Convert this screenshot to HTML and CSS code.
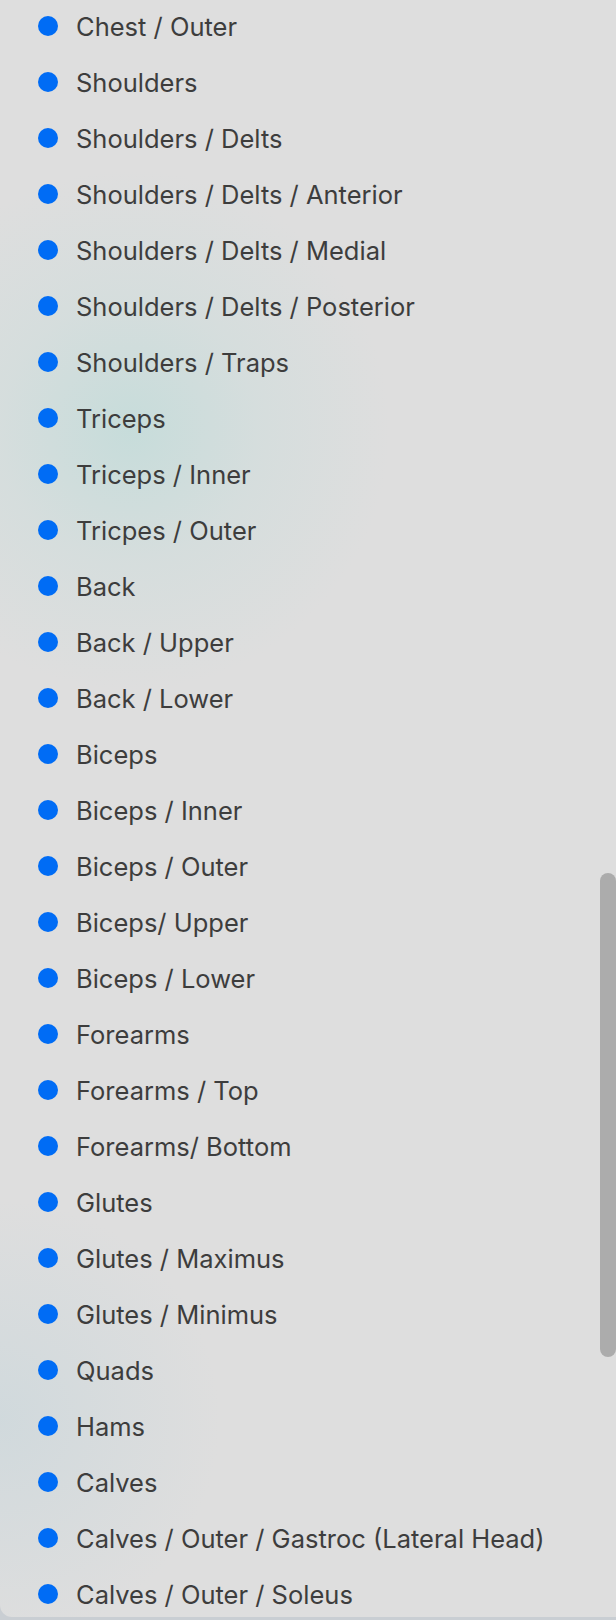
FILE: index.html
```html
<!DOCTYPE html>
<html lang="en">
<head>
  <meta charset="UTF-8">
  <title>Muscle Groups</title>
  <link rel="stylesheet" href="styles.css">
</head>
<body>

  <div class="panel">
    <!-- Muscle group list -->
    <ul class="muscle-list">
      <li><span class="dot"></span>Chest / Outer</li>
      <li><span class="dot"></span>Shoulders</li>
      <li><span class="dot"></span>Shoulders / Delts</li>
      <li><span class="dot"></span>Shoulders / Delts / Anterior</li>
      <li><span class="dot"></span>Shoulders / Delts / Medial</li>
      <li><span class="dot"></span>Shoulders / Delts / Posterior</li>
      <li><span class="dot"></span>Shoulders / Traps</li>
      <li><span class="dot"></span>Triceps</li>
      <li><span class="dot"></span>Triceps / Inner</li>
      <li><span class="dot"></span>Tricpes / Outer</li>
      <li><span class="dot"></span>Back</li>
      <li><span class="dot"></span>Back / Upper</li>
      <li><span class="dot"></span>Back / Lower</li>
      <li><span class="dot"></span>Biceps</li>
      <li><span class="dot"></span>Biceps / Inner</li>
      <li><span class="dot"></span>Biceps / Outer</li>
      <li><span class="dot"></span>Biceps/ Upper</li>
      <li><span class="dot"></span>Biceps / Lower</li>
      <li><span class="dot"></span>Forearms</li>
      <li><span class="dot"></span>Forearms / Top</li>
      <li><span class="dot"></span>Forearms/ Bottom</li>
      <li><span class="dot"></span>Glutes</li>
      <li><span class="dot"></span>Glutes / Maximus</li>
      <li><span class="dot"></span>Glutes / Minimus</li>
      <li><span class="dot"></span>Quads</li>
      <li><span class="dot"></span>Hams</li>
      <li><span class="dot"></span>Calves</li>
      <li><span class="dot"></span>Calves / Outer / Gastroc (Lateral Head)</li>
      <li><span class="dot"></span>Calves / Outer / Soleus</li>
    </ul>

    <div class="scroll-thumb"></div>
  </div>

</body>
</html>
```

FILE: styles.css
```css
html, body {
  margin: 0;
  height: 1620px;
  overflow: hidden;
}
body {
  font-family: Inter, "Noto Sans", sans-serif;
  background-color: #c9ced3;
}
.panel {
  position: relative;
  height: 1617px;
  overflow: hidden;
  border-bottom-left-radius: 12px;
  background-color: #dedede;
  background-image:
    radial-gradient(circle at 130px 430px, rgba(196, 220, 218, 0.9) 0, rgba(205, 221, 220, 0.5) 130px, rgba(222, 222, 222, 0) 260px),
    radial-gradient(circle at 0 1420px, rgba(205, 216, 220, 0.8) 0, rgba(222, 222, 222, 0) 220px);
}
.muscle-list {
  list-style: none;
  margin: -2px 0 0 0;
  padding: 0 0 0 38px;
}
.muscle-list li {
  display: flex;
  align-items: center;
  gap: 18px;
  height: 56px;
  font-size: 25.5px;
  color: #3d3d3d;
  white-space: nowrap;
}
.dot {
  flex: none;
  width: 20px;
  height: 20px;
  border-radius: 50%;
  background-color: #006cf5;
}
.scroll-thumb {
  position: absolute;
  left: 600px;
  top: 873px;
  width: 16px;
  height: 484px;
  border-radius: 8px;
  background-color: #acacac;
}
```
